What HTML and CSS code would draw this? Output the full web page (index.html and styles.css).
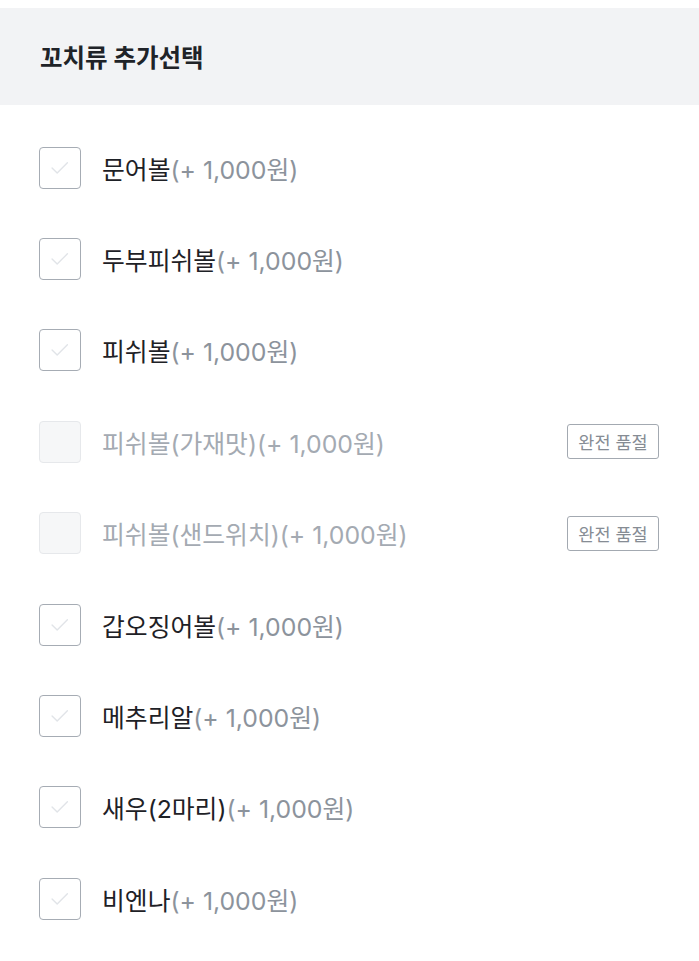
FILE: index.html
```html
<!DOCTYPE html>
<html lang="ko">
<head>
    <meta charset="UTF-8">
    <title>꼬치류 추가선택</title>
    <link rel="stylesheet" href="styles.css">
</head>
<body>

<div id="container">
    <div class="header">
        <h1>꼬치류 추가선택</h1>
    </div>
    <ul class="options">
        <li class="option">
            <span class="box"><svg viewBox="0 0 42 42"><path d="M13 21.5l5.5 5.5 11-11"/></svg></span>
            <span class="name">문어볼<span class="price">(+ 1,000원)</span></span>
        </li>
        <li class="option">
            <span class="box"><svg viewBox="0 0 42 42"><path d="M13 21.5l5.5 5.5 11-11"/></svg></span>
            <span class="name">두부피쉬볼<span class="price">(+ 1,000원)</span></span>
        </li>
        <li class="option">
            <span class="box"><svg viewBox="0 0 42 42"><path d="M13 21.5l5.5 5.5 11-11"/></svg></span>
            <span class="name">피쉬볼<span class="price">(+ 1,000원)</span></span>
        </li>
        <li class="option soldout">
            <span class="box"></span>
            <span class="name">피쉬볼(가재맛)<span class="price">(+ 1,000원)</span></span>
            <span class="badge">완전 품절</span>
        </li>
        <li class="option soldout">
            <span class="box"></span>
            <span class="name">피쉬볼(샌드위치)<span class="price">(+ 1,000원)</span></span>
            <span class="badge">완전 품절</span>
        </li>
        <li class="option">
            <span class="box"><svg viewBox="0 0 42 42"><path d="M13 21.5l5.5 5.5 11-11"/></svg></span>
            <span class="name">갑오징어볼<span class="price">(+ 1,000원)</span></span>
        </li>
        <li class="option">
            <span class="box"><svg viewBox="0 0 42 42"><path d="M13 21.5l5.5 5.5 11-11"/></svg></span>
            <span class="name">메추리알<span class="price">(+ 1,000원)</span></span>
        </li>
        <li class="option">
            <span class="box"><svg viewBox="0 0 42 42"><path d="M13 21.5l5.5 5.5 11-11"/></svg></span>
            <span class="name">새우(2마리)<span class="price">(+ 1,000원)</span></span>
        </li>
        <li class="option">
            <span class="box"><svg viewBox="0 0 42 42"><path d="M13 21.5l5.5 5.5 11-11"/></svg></span>
            <span class="name">비엔나<span class="price">(+ 1,000원)</span></span>
        </li>
    </ul>
</div>

</body>
</html>
```

FILE: styles.css
```css
body {
    margin: 0;
    background-color: white;
    font-family: "Inter", "Noto Sans CJK KR", sans-serif;
    color: #1e2126;
}
#container {
    padding-top: 8px;
}
.header {
    height: 97px;
    background-color: #f2f3f5;
    display: flex;
    align-items: center;
    padding: 0 40px;
}
.header h1 {
    margin: 0;
    font-size: 24.5px;
    font-weight: 700;
    color: #202328;
}
.options {
    list-style: none;
    margin: 0;
    padding: 17px 40px 0 39px;
}
.option {
    height: 91.4px;
    display: flex;
    align-items: center;
}
.box {
    width: 42px;
    height: 42px;
    box-sizing: border-box;
    border: 1.5px solid #a6acb4;
    border-radius: 4px;
    flex-shrink: 0;
}
.box svg {
    display: block;
    width: 39px;
    height: 39px;
    fill: none;
    stroke: #e1e4e8;
    stroke-width: 1.5;
    stroke-linecap: round;
    stroke-linejoin: round;
}
.name {
    margin-left: 21px;
    font-size: 24.8px;
    flex: 1;
}
.price {
    color: #8c939c;
}
.soldout .box {
    background-color: #f6f7f8;
    border-color: #e6e8eb;
}
.soldout .name,
.soldout .price {
    color: #a4aab2;
}
.badge {
    width: 92px;
    height: 35px;
    box-sizing: border-box;
    border: 1.5px solid #a3a9b1;
    border-radius: 3px;
    font-size: 17.5px;
    color: #868c94;
    display: flex;
    align-items: center;
    justify-content: center;
}
```
